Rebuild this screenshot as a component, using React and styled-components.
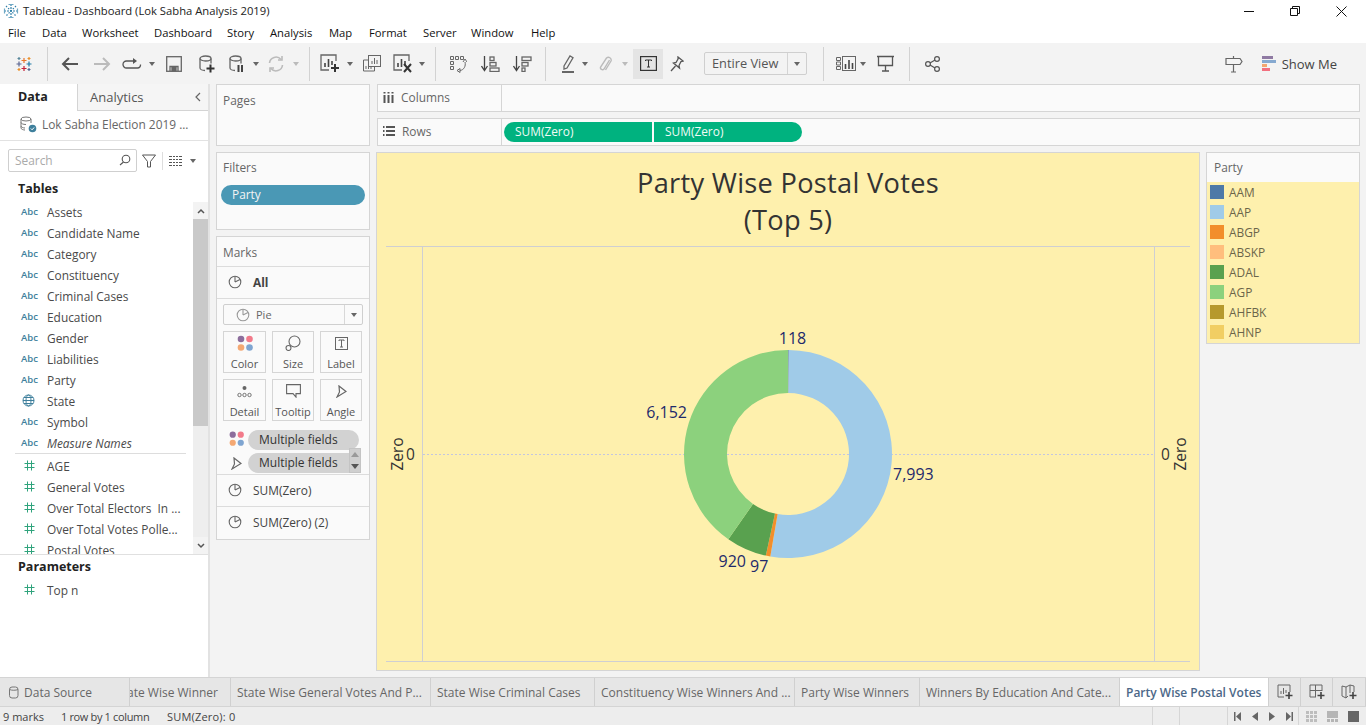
import React from "react";
import styled, { createGlobalStyle } from "styled-components";

const Global = createGlobalStyle`
  html, body { margin: 0; padding: 0; background: #fff; }
  * { box-sizing: border-box; }
  body { font-family: "Open Sans", "Noto Sans", sans-serif; font-size: 11.9px; color: #333; }
`;

const Page = styled.div`
  width: 1366px; height: 725px; overflow: hidden; display: flex; flex-direction: column; background: #fff;
`;
const TitleBar = styled.div`
  height: 22px; flex-shrink: 0; display: flex; align-items: center; padding-left: 3px; gap: 4px; color: #222; font-size: 11.25px;
`;
const TitleText = styled.span`
  padding-bottom: 2px;
`;
const WinButtons = styled.div`
  margin-left: auto; display: flex; align-items: center; height: 22px; padding-right: 2px;
`;
const WinButton = styled.div`
  width: 46px; height: 22px; display: flex; align-items: center; justify-content: center;
`;
const MenuBar = styled.div`
  height: 21px; flex-shrink: 0; display: flex; align-items: center; padding-left: 8px; color: #111; font-size: 11.25px;
`;
const MenuItem = styled.span`
  width: ${p => p.$w}px; white-space: nowrap;
`;
const Toolbar = styled.div`
  height: 41px; flex-shrink: 0; background: #f3f3f3; display: flex; align-items: center;
`;
const ToolGroup = styled.div`
  display: flex; align-items: center; height: 41px;
  padding: ${p => `0 ${p.$r || 0}px 0 ${p.$l || 0}px`};
`;
const ToolSep = styled.div`
  width: 1px; height: 34px; background: #d2d2d2;
`;
const Slot = styled.div`
  width: ${p => p.$w}px; height: 30px; display: flex; align-items: center; justify-content: center; flex-shrink: 0;
  background: ${p => p.$active ? "#e4e4e4" : "transparent"};
  margin-left: ${p => p.$ml || 0}px;
`;
const Caret = styled.i`
  display: block; width: 0; height: 0; border-left: 3.5px solid transparent; border-right: 3.5px solid transparent;
  border-top: 4px solid ${p => p.$c || "#666"};
`;
const ViewSelect = styled.div`
  width: 103px; height: 23px; margin-left: 13px; border: 1px solid #cfcfcf; border-radius: 2px; display: flex; align-items: center; color: #555; font-size: 12.8px;
`;
const ViewLabel = styled.span`
  flex: 1; padding-left: 7px; border-right: 1px solid #d4d4d4; line-height: 21px; white-space: nowrap;
`;
const ViewCaret = styled.span`
  width: 18px; display: flex; justify-content: center;
`;
const ToolRight = styled.div`
  margin-left: auto; display: flex; align-items: center; padding-right: 29px; gap: 19px;
`;
const ShowMe = styled.div`
  display: flex; align-items: center; gap: 6px; font-size: 13px; color: #444;
`;
const Main = styled.div`
  height: 593px; flex-shrink: 0; display: flex; background: #f3f3f3;
`;
const DataPane = styled.div`
  width: 210px; flex-shrink: 0; background: #fff; border-right: 2px solid #e2e2e2; display: flex; flex-direction: column;
`;
const DataTabs = styled.div`
  height: 27px; display: flex; flex-shrink: 0;
`;
const DataTab = styled.div`
  width: 77px; padding-left: 18px; line-height: 26px; font-weight: 700; color: #222; font-size: 12.5px;
`;
const AnalyticsTab = styled.div`
  flex: 1; background: #f5f5f5; border-left: 1px solid #d4d4d4; border-bottom: 1px solid #d4d4d4; display: flex; align-items: center; padding: 0 6px 0 12px; justify-content: space-between; color: #555; font-size: 13px;
`;
const SourceRow = styled.div`
  height: 30px; display: flex; align-items: center; gap: 5px; padding: 0 0 3px 20px; border-bottom: 1px solid #e2e2e2; color: #666; flex-shrink: 0; white-space: nowrap;
`;
const SearchRow = styled.div`
  height: 37px; display: flex; align-items: center; padding: 2px 0 0 8px; flex-shrink: 0;
`;
const SearchBox = styled.div`
  width: 129px; height: 23px; margin-right: 5px; border: 1px solid #cfcfcf; border-radius: 2px; display: flex; align-items: center; justify-content: space-between; padding: 0 5px 1px 6px; color: #aaa;
`;
const SearchSep = styled.div`
  width: 1px; height: 18px; background: #ddd; margin: 0 6px;
`;
const GridCaret = styled.span`
  margin-left: 8px;
`;
const SectionHead = styled.div`
  height: 23px; padding-left: 18px; padding-bottom: ${p => p.$pb || 0}px; display: flex; align-items: center; font-weight: 700; color: #222; flex-shrink: 0; font-size: 12.5px;
`;
const FieldArea = styled.div`
  height: 354px; display: flex; overflow: hidden; flex-shrink: 0; border-bottom: 1px solid #e0e0e0;
`;
const FieldList = styled.div`
  flex: 1; min-width: 0; overflow: hidden;
`;
const FieldRow = styled.div`
  height: 21px; display: flex; align-items: center; color: #4a4a4a; white-space: pre; font-style: ${p => p.$italic ? "italic" : "normal"};
  margin-top: ${p => p.$mt || 0}px;
`;
const FieldIcon = styled.span`
  width: 47px; padding-left: ${p => p.$pl || 21}px; display: flex; align-items: center; flex-shrink: 0;
`;
const AbcMark = styled.span`
  font-size: 9.5px; font-weight: 600; font-style: normal; color: #3e7f9c;
`;
const FieldDivider = styled.div`
  height: 2px; margin: 0 7px 0 15px; border-top: 1px solid #ddd;
`;
const ScrollBar = styled.div`
  width: 15px; background: #eee; display: flex; flex-direction: column; flex-shrink: 0; margin-top: 1px;
`;
const ScrollEnd = styled.div`
  height: 17px; display: flex; align-items: center; justify-content: center;
  background: #f3f3f3;
`;
const ScrollThumb = styled.div`
  height: 207px; background: #c9c9c9;
`;
const ScrollFill = styled.div`
  flex: 1;
`;
const Workspace = styled.div`
  flex: 1; min-width: 0; display: flex; padding: 0 6px 6px; gap: 6px;
`;
const SideCol = styled.div`
  width: 154px; flex-shrink: 0; display: flex; flex-direction: column; gap: 6px;
`;
const Card = styled.div`
  height: ${p => p.$h}px; background: #fafafa; border: 1px solid #d5d5d5; flex-shrink: 0;
`;
const CardTitle = styled.div`
  padding: ${p => p.$pt || 7}px 0 0 6px; color: #666; height: 29px;
`;
const FilterPill = styled.div`
  height: 20px; margin: 3px 4px 0 4px; border-radius: 10px; background: #4a98b5; color: #f4f4f4; padding-left: 11px; line-height: 19px;
`;
const MarksRow = styled.div`
  height: 32px; display: flex; align-items: center; border-top: 1px solid #dcdcdc; color: #444; padding-bottom: 2px;
  font-weight: ${p => p.$bold ? 700 : 400};
`;
const MarksRowIcon = styled.span`
  width: 36px; padding-left: 11px; display: flex; align-items: center;
`;
const SelectWrap = styled.div`
  border-top: 1px solid #dcdcdc;
`;
const MarkSelect = styled.div`
  height: 21px; margin: 5px 6px 0; background: #fafafa; border: 1px solid #cfcfcf; border-radius: 2px; display: flex; align-items: center; color: #666; font-size: 11px;
`;
const MarkSelectLabel = styled.span`
  flex: 1; display: flex; align-items: center; gap: 6px; padding-left: 12px; border-right: 1px solid #d8d8d8; height: 19px;
`;
const MarkSelectCaret = styled.span`
  width: 17px; display: flex; justify-content: center;
`;
const MarkGrid = styled.div`
  display: grid; grid-template-columns: 43px 42px 42px; grid-auto-rows: 42px; gap: 6px; margin: 6px 6px 0;
`;
const MarkBtn = styled.div`
  border: 1px solid #d5d5d5; display: flex; flex-direction: column; align-items: center; justify-content: flex-end; color: #555; font-size: 11px; padding-bottom: 1px; gap: 3px;
`;
const MarkIconWrap = styled.div`
  height: 20px; display: flex; align-items: center; justify-content: center;
`;
const PillRows = styled.div`
  margin-top: 9px; height: 44px; position: relative;
`;
const PillRow = styled.div`
  height: 23px; display: flex; align-items: flex-start; padding-left: 11px; gap: 3px;
`;
const AngleHolder = styled.span`
  width: 17px; display: flex; justify-content: center; padding-top: 4px;
`;
const GreyPill = styled.div`
  width: 111px; height: 20px; border-radius: 10px; background: #d2d2d2; color: #333; padding-left: 11px; line-height: 19px; white-space: nowrap; font-size: 12px;
`;
const PillScroll = styled.div`
  position: absolute; right: 8px; top: 18px; width: 12px; height: 25px; background: #cfcfcf; border: 1px solid #c4c4c4; display: flex; flex-direction: column; align-items: center; justify-content: space-around;
`;
const RightCol = styled.div`
  flex: 1; min-width: 0; display: flex; flex-direction: column; gap: 6px;
`;
const Shelf = styled.div`
  height: 28px; margin-left: 1px; flex-shrink: 0; background: #fafafa; border: 1px solid #d5d5d5; display: flex;
`;
const ShelfLabel = styled.div`
  width: 124px; border-right: 1px solid #d5d5d5; display: flex; align-items: center; gap: 7px; padding: 0 0 2px 5px; color: #666; flex-shrink: 0;
`;
const ShelfPills = styled.div`
  display: flex; align-items: center; padding-left: 2px; gap: 2px;
`;
const GreenPill = styled.div`
  width: 148px; height: 20px; background: #00b27f; color: #f1fbf6; padding-left: 11px; line-height: 19px;
  border-radius: ${p => p.$first ? "10px 0 0 10px" : "0 10px 10px 0"};
`;
const ViewRow = styled.div`
  flex: 1; min-height: 0; display: flex; gap: 6px;
`;
const ChartPane = styled.div`
  width: 824px; height: 519px; background: #fef0ad; border: 1px solid #d5d5d5; display: flex; flex-direction: column; flex-shrink: 0;
`;
const ChartTitle = styled.div`
  height: 93px; padding-top: 11px; text-align: center; font-size: 27.2px; letter-spacing: .3px; line-height: 37px; color: #333; flex-shrink: 0;
`;
const PlotSvg = styled.svg`
  display: block; width: 822px; height: 424px; font-family: "Open Sans", sans-serif;
`;
const Legend = styled.div`
  width: 154px; height: 192px; background: #fafafa; border: 1px solid #d5d5d5; flex-shrink: 0; display: flex; flex-direction: column;
`;
const LegendHead = styled.div`
  height: 29px; padding-left: 7px; line-height: 29px; color: #666;
`;
const LegendBody = styled.div`
  flex: 1; background: #fef0ad;
`;
const LegendRow = styled.div`
  height: 20px; display: flex; align-items: center; padding-left: 3px; gap: 5px; color: #6b654a;
`;
const Swatch = styled.span`
  width: 14px; height: 14px; background: ${p => p.$c}; flex-shrink: 0;
`;
const TabBar = styled.div`
  height: 30px; background: #e6e6e6; border-top: 1px solid #d4d4d4; border-bottom: 1px solid #d4d4d4; display: flex; flex-shrink: 0; color: #666; font-size: 12px;
`;
const SheetTab = styled.div`
  width: ${p => p.$w}px; flex-shrink: 0; overflow: hidden; white-space: nowrap; display: flex; align-items: center;
  justify-content: ${p => p.$clip ? "flex-end" : "flex-start"};
  padding: ${p => p.$clip ? "0 12px 0 0" : `0 0 0 ${p.$pl || 6}px`}; border-right: 1px solid #d0d0d0;
  background: ${p => p.$active ? "#fff" : "transparent"};
  color: ${p => p.$active ? "#4c6888" : "#666"};
  font-weight: ${p => p.$active ? 600 : 400};
  gap: 5px;
`;
const TabBtn = styled.div`
  width: ${p => p.$w}px; flex-shrink: 0; display: flex; align-items: center; justify-content: center; border-right: 1px solid #d0d0d0;
`;
const StatusBar = styled.div`
  height: 18px; background: #ededed; display: flex; align-items: center; color: #444; font-size: 11px; flex-shrink: 0;
`;
const StatusText = styled.span`
  width: ${p => p.$w}px; flex-shrink: 0; white-space: nowrap; padding-left: ${p => p.$pl || 0}px;
  letter-spacing: ${p => p.$ls || 0}px;
`;
const StatusCell = styled.span`
  width: ${p => p.$w}px; height: 18px; flex-shrink: 0; display: flex; align-items: center; justify-content: center; gap: ${p => p.$g || 0}px;
  border-right: ${p => p.$last ? "none" : "1px solid #d6d6d6"};
`;

/* icons */
const Ic = ({ w = 20, h = 20, s = "#555", sw = 1.3, children }) => (
  <svg width={w} height={h} viewBox={`0 0 ${w} ${h}`} fill="none" stroke={s} strokeWidth={sw}>{children}</svg>
);
const CrossLogo = () => (
  <svg width="18" height="18" viewBox="0 0 18 18" strokeWidth="1.2">
    <path d="M9 3v5M6.500 5.500h5" stroke="#e8762c" /><path d="M9 11v5M6.500 13.500h5" stroke="#c72037" />
    <path d="M4 6.500v5M1.500 9h5" stroke="#5b6591" /><path d="M14 6.500v5M11.500 9h5" stroke="#1f7aa5" />
    <path d="M4 2v3M2.500 3.500h3" stroke="#59879b" /><path d="M14 2v3M12.500 3.500h3" stroke="#eb912b" />
    <path d="M4 13v3M2.500 14.500h3" stroke="#eb912b" /><path d="M14 13v3M12.500 14.500h3" stroke="#5b6591" />
  </svg>
);
const SnowLogo = () => (
  <svg width="16" height="16" viewBox="0 0 16 16" stroke="#2f7fa8" strokeWidth="1.2" fill="none">
    <path d="M8 1v14M1 8h14" strokeDasharray="2 1" /><path d="M3 3l10 10M13 3L3 13" strokeDasharray="1.500 1.500" />
    <path d="M5.500 1.500h5M5.500 14.500h5M1.500 5.500v5M14.500 5.500v5" stroke="#6fa9c6" />
  </svg>
);
const Plus = ({ x, y }) => <path d={`M${x} ${y - 4}v8M${x - 4} ${y}h8`} stroke="#333" strokeWidth="2" fill="none" />;
const Back = ({ s, flip }) => (
  <Ic w={18} h={16} s={s} sw={2}><path d={flip ? "M1 8h15M10 2l6 6-6 6" : "M17 8H2M8 2L2 8l6 6"} /></Ic>
);
const LoopArrow = () => (
  <Ic w={20} h={14}><path d="M13 4H4.500a3 3 0 0 0 0 7h11a3 3 0 0 0 3-3.500" /><path d="M11 1l4 3-4 3" fill="#555" stroke="none" /></Ic>
);
const Save = () => (
  <Ic w={16} h={16} s="#666"><rect x=".7" y=".7" width="14.600" height="14.600" /><path d="M4 15v-4.500h8V15" /><rect x="6" y="11.500" width="4" height="3.500" fill="#666" /></Ic>
);
const Db = ({ kind }) => (
  <Ic w={16} h={18} s="#666">
    <ellipse cx="6.500" cy="3.500" rx="5.500" ry="2.500" />
    <path d="M1 3.500v9.500c0 1.400 2.500 2.500 5 2.500M12 3.500v5" />
    {kind === "plus" ? <Plus x={11.500} y={13.500} /> : <path d="M9.500 10v7M13 10v7" stroke="#444" strokeWidth="2" />}
  </Ic>
);
const Refresh = () => (
  <Ic w={18} h={18} s="#bbb" sw={1.600}><path d="M2.500 8A6.500 6.500 0 0 1 14 4.500M15.500 10A6.500 6.500 0 0 1 4 13.500" /><path d="M15 1v4h-4M3 17v-4h4" /></Ic>
);
const ChartAdd = () => (
  <Ic w={20} h={19} s="#666"><path d="M16 7V1H1v15h8" /><path d="M5 13V9M8.500 13V5M12 11V7" stroke="#444" strokeWidth="1.600" /><Plus x={15} y={14} /></Ic>
);
const Dup = () => (
  <Ic w={18} h={17} s="#666" sw={1}><rect x="5.500" y=".5" width="12" height="11" fill="#f3f3f3" /><path d="M9 9V6M11.500 9V3M14 9V5" /><path d="M5 5H.5v11h11v-4" /><path d="M3 14v-3M5.500 14v-2M8 14v-2" /></Ic>
);
const ChartClear = () => (
  <Ic w={20} h={19} s="#666"><path d="M16 7V1H1v15h8" /><path d="M5 13V9M8.500 13V5M12 11V7" stroke="#444" strokeWidth="1.600" /><path d="M11 10l7 8M18 10l-7 8" stroke="#333" strokeWidth="2" /></Ic>
);
const Swap = () => (
  <Ic w={18} h={18} s="#666" sw={1}>
    <path d="M1.500 1.500h3v3h-3zM6.500 1.500h3v3h-3zM11.500 1.500h3v3h-3zM1.500 6.500h3v3h-3zM1.500 11.500h3v3h-3z" />
    <path d="M16 7c1 4-1 8-5 8.500M8 15.500l3-2v4zM14 7l2-3 2 3" />
  </Ic>
);
const Sort = ({ desc }) => (
  <Ic w={19} h={16} s="#666"><path d="M3.500 0v14M.5 10l3 4.500 3-4.500" stroke="#444" /><rect x="9" y="1" width={desc ? 9 : 4} height="3.500" /><rect x="9" y="6.500" width="6" height="3.500" /><rect x="9" y="12" width={desc ? 3 : 9} height="3.500" /></Ic>
);
const Highlighter = () => (
  <Ic w={14} h={19} s="#666"><path d="M3 12L9 2l3 1.800-6 10.200-3 1z" /><path d="M1 18h12" strokeWidth="2" /></Ic>
);
const Clip = () => (
  <Ic w={13} h={18} s="#bbb" sw={1.400}><path d="M10.500 5L5 14a2 2 0 0 1-3.400-2L7.500 3a2.800 2.800 0 0 1 4.500 3L6.500 15" /></Ic>
);
const TBox = () => (
  <Ic w={17} h={15} s="#333" sw={1.200}><rect x=".6" y=".6" width="15.800" height="13.800" /><path d="M5.500 5V4h6v1M8.500 4v7M7 11h3" strokeWidth="1" /></Ic>
);
const Pin = () => (
  <Ic w={14} h={16} s="#555"><path d="M8 1l5 4-2 .5-2 4 .5 2.500L3.500 7 6 6.500 8 3zM5.500 10L1 15" /></Ic>
);
const ShowIc = () => (
  <Ic w={20} h={15} s="#666" sw={1}><path d="M.5 1.500h4v3h-4zM.5 6h4v3h-4zM.5 10.500h4v3h-4z" /><rect x="6.500" y=".5" width="13" height="14" /><path d="M9.500 13V8M13 13V4M16.500 13V7" strokeWidth="1.600" stroke="#444" /></Ic>
);
const Present = () => (
  <Ic w={17} h={17} s="#555"><path d="M0 1.500h17M1.500 1.500v9h14v-9M8.500 10.500V16M5 16h7" /></Ic>
);
const Share = () => (
  <Ic w={15} h={16} s="#555" sw={1.200}><circle cx="3" cy="8" r="2.400" /><circle cx="12" cy="3" r="2.400" /><circle cx="12" cy="13" r="2.400" /><path d="M5 7l5-3M5 9l5 3" /></Ic>
);
const SignPost = () => (
  <Ic w={18} h={18} s="#666" sw={1.200}><path d="M1 3.500h14l2 3-2 3H1zM8.500 1v2.500M8.500 9.500V17M6 17h5" /></Ic>
);
const ShowMeBars = () => (
  <svg width="14" height="16" viewBox="0 0 14 16">
    <rect y="0" width="11" height="3" fill="#8f7aa3" /><rect y="4" width="14" height="3" fill="#86a9d0" />
    <rect y="8" width="5" height="3" fill="#f3a670" /><rect y="12" width="8" height="3" fill="#f2707f" />
  </svg>
);
const PieIc = ({ s = "#666" }) => (
  <Ic w={14} h={14} s={s} sw={1.100}><circle cx="7" cy="7" r="5.800" /><path d="M7 7V1.200M7 7l5-2.500" /></Ic>
);
const Hash = () => (
  <Ic w={11} h={11} s="#2fa37c" sw={1}><path d="M3.500 .5v10M7.500 .5v10M.5 3.500h10M.5 7.500h10" /></Ic>
);
const Globe = () => (
  <Ic w={13} h={13} s="#3e7f9c" sw={1}><circle cx="6.500" cy="6.500" r="5.500" /><ellipse cx="6.500" cy="6.500" rx="2.500" ry="5.500" /><path d="M1 6.500h11M1.800 3.500h9.400M1.800 9.500h9.400" /></Ic>
);
const DbCheck = () => (
  <svg width="17" height="17" viewBox="0 0 17 17" fill="none" stroke="#777" strokeWidth="1">
    <ellipse cx="6" cy="3" rx="5" ry="2" /><path d="M1 3v9c0 1.200 2.200 2 4 2M11 3v4M1 6.500c0 1 2 2 5 2M1 10c0 1 2 2 4 2" />
    <circle cx="12.500" cy="12.500" r="3.800" fill="#3e7f9c" stroke="none" /><path d="M10.800 12.500l1.300 1.300 2-2.300" stroke="#fff" />
  </svg>
);
const Magnifier = () => (
  <Ic w={12} h={12} s="#555" sw={1.100}><circle cx="7" cy="5" r="3.800" /><path d="M4.500 8L1 11" /></Ic>
);
const Funnel = () => (
  <Ic w={14} h={14} s="#555" sw={1}><path d="M.5 1h13L8.500 7.500V13h-3V7.500z" /></Ic>
);
const GridList = () => (
  <svg width="13" height="10" viewBox="0 0 13 10" stroke="#555" strokeWidth="1" fill="none"><path d="M0 .5h13M0 3.500h13M0 6.500h13M0 9.500h13" /><path d="M3.500 0v10M6.500 0v10M9.500 0v10" stroke="#fff" /></svg>
);
const ColumnsIc = () => (
  <Ic w={11} h={11} s="#555" sw={2}><path d="M1.500 3v8M5.500 3v8M9.500 3v8" /><path d="M1.500 0v1.500M5.500 0v1.500M9.500 0v1.500" /></Ic>
);
const RowsIc = () => (
  <Ic w={12} h={10} s="#555" sw={2}><path d="M3 1h9M3 5h9M3 9h9M0 1h1.500M0 5h1.500M0 9h1.500" /></Ic>
);
const Dots = ({ size = 18 }) => (
  <svg width={size} height={size} viewBox="0 0 18 18">
    <circle cx="5" cy="5" r="3.300" fill="#8c6d9c" /><circle cx="13.500" cy="5" r="3.300" fill="#f27a8a" />
    <circle cx="5" cy="13.500" r="3.300" fill="#f4a873" /><circle cx="13.500" cy="13.500" r="3.300" fill="#7fa5d1" />
  </svg>
);
const SizeIc = () => (
  <Ic w={16} h={16} s="#666" sw={1.100}><circle cx="9.500" cy="6.500" r="5.500" /><circle cx="3.500" cy="13" r="2.500" /></Ic>
);
const LabelIc = () => (
  <Ic w={13} h={13} s="#666" sw={1}><rect x=".5" y=".5" width="12" height="12" /><path d="M4 4V3h5v1M6.500 3v7M5 10h3" /></Ic>
);
const DetailIc = () => (
  <svg width="15" height="13" viewBox="0 0 15 13" fill="none" stroke="#666" strokeWidth=".9"><circle cx="7.500" cy="3" r="2" fill="#666" stroke="none" /><circle cx="2.500" cy="10" r="1.700" /><circle cx="7.500" cy="10" r="1.700" /><circle cx="12.500" cy="10" r="1.700" /></svg>
);
const TooltipIc = () => (
  <Ic w={15} h={14} s="#666" sw={1.100}><path d="M.6.6h13.800v9H10v3.500L7 9.600H.6z" /></Ic>
);
const AngleIc = ({ s = "#666" }) => (
  <Ic w={11} h={13} s={s} sw={1.200}><path d="M3 1l7 5.500-9 5.500 2.500-5z" /></Ic>
);
const Chevron = ({ up, s = "#555" }) => (
  <Ic w={8} h={6} s={s} sw={1.500}><path d={up ? "M1 5l3-3 3 3" : "M1 1l3 3 3-3"} /></Ic>
);
const Tri = ({ up, c }) => (
  <svg width="8" height="5" viewBox="0 0 8 5"><path d={up ? "M0 5L4 0l4 5z" : "M0 0h8L4 5z"} fill={c} /></svg>
);
const DbSmall = () => (
  <Ic w={10} h={13} s="#777" sw={1}><rect x=".5" y="1" width="8.500" height="11" rx="2.500" /><path d="M.5 3.500c2 1 6.500 1 8.500 0" /></Ic>
);
const AddSheet = () => (
  <Ic w={16} h={16} s="#666" sw={1}><path d="M13 8V1H1v12h6" /><path d="M4 10V7M6.500 10V4M9 9V6" /><path d="M12 8v7M8.500 11.500h7" stroke="#444" strokeWidth="1.600" /></Ic>
);
const AddDash = () => (
  <Ic w={16} h={16} s="#666" sw={1}><path d="M7 13H1V1h12v6M1 6.500h12M6.500 1v12" /><path d="M12 8v7M8.500 11.500h7" stroke="#444" strokeWidth="1.600" /></Ic>
);
const AddStory = () => (
  <Ic w={16} h={16} s="#666" sw={1}><path d="M7 12l-2 2-4-2V2l4 1 4-2 4 1v6M5 3v11M9 1v8" /><path d="M12 8v7M8.500 11.500h7" stroke="#444" strokeWidth="1.600" /></Ic>
);
const NavFirst = ({ s = "#666", last }) => (
  <svg width="7" height="9" viewBox="0 0 7 9" fill={s}>{last ? <path d="M0 0l5 4.500L0 9zM5.500 0H7v9H5.500z" /> : <path d="M7 0L2 4.500 7 9zM0 0h1.500v9H0z" />}</svg>
);
const NavStep = ({ right }) => (
  <svg width="6" height="9" viewBox="0 0 6 9" fill="#666">{right ? <path d="M0 0l6 4.500L0 9z" /> : <path d="M6 0L0 4.500 6 9z" />}</svg>
);
const ViewSmall = () => (
  <svg width="11" height="11" viewBox="0 0 11 11" fill="#bdbdbd"><path d="M0 0h3v3H0zM4 0h3v3H4zM8 0h3v3H8zM0 4h3v3H0zM4 4h3v3H4zM8 4h3v3H8zM0 8h3v3H0zM4 8h3v3H4zM8 8h3v3H8z" /></svg>
);
const ViewMid = () => (
  <svg width="11" height="11" viewBox="0 0 11 11" fill="#b5b5b5"><path d="M0 0h11v7H0zM0 8h3v3H0zM4 8h3v3H4zM8 8h3v3H8z" /></svg>
);
const ViewFull = () => (
  <svg width="11" height="11" viewBox="0 0 11 11" fill="#666"><path d="M0 0h11v11H0z" /></svg>
);

const polar = (r, deg) => {
  const a = (deg - 90) * Math.PI / 180;
  return [788 + r * Math.cos(a), 454 + r * Math.sin(a)];
};
const arc = (a0, a1, R = 104, r = 61) => {
  const [x0, y0] = polar(R, a0), [x1, y1] = polar(R, a1), [x2, y2] = polar(r, a1), [x3, y3] = polar(r, a0);
  const lg = a1 - a0 > 180 ? 1 : 0;
  return `M${x0} ${y0}A${R} ${R} 0 ${lg} 1 ${x1} ${y1}L${x2} ${y2}A${r} ${r} 0 ${lg} 0 ${x3} ${y3}Z`;
};
const slices = [
  [0, 0.4, "#4e79a7"], [0.4, 189.8, "#a0cbe8"], [189.8, 192.3, "#f28e2b"], [192.3, 215, "#59a14f"], [215, 360, "#8cd17d"],
];
const legend = [["AAM", "#4e79a7"], ["AAP", "#a0cbe8"], ["ABGP", "#f28e2b"], ["ABSKP", "#ffbe7d"], ["ADAL", "#59a14f"], ["AGP", "#8cd17d"], ["AHFBK", "#b6992d"], ["AHNP", "#f1ce63"]];
const dims = ["Assets", "Candidate Name", "Category", "Constituency", "Criminal Cases", "Education", "Gender", "Liabilities", "Party"];
const measures = ["AGE", "General Votes", "Over Total Electors  In ...", "Over Total Votes Polle...", "Postal Votes"];
const menus = [["File", 34], ["Data", 40], ["Worksheet", 72], ["Dashboard", 73], ["Story", 43], ["Analysis", 59], ["Map", 40], ["Format", 54], ["Server", 48], ["Window", 60], ["Help", 40]];
const tabs = [["State Wise General Votes And P...", 200], ["State Wise Criminal Cases", 164], ["Constituency Wise Winners And ...", 200], ["Party Wise Winners", 125], ["Winners By Education And Cate...", 200]];

const Plot = () => {
  const ink = "#1f2a6b";
  const dark = "#333";
  return (
    <PlotSvg viewBox="377 246 822 424">
      <path d="M386 246.500H1190M386 661.500H1190M422.500 246V661M1154.500 246V661" stroke="#cfcfd2" strokeWidth="1" />
      <path d="M423 454.500H1154" stroke="#c3c6e0" strokeWidth="1" strokeDasharray="2 2" />
      {slices.map(([a, b, c]) => <path key={c} d={arc(a, b)} fill={c} />)}
      <g fontSize="16" fill={ink}>
        <text x="792.500" y="344" textAnchor="middle">118</text>
        <text x="687" y="418" textAnchor="end">6,152</text>
        <text x="893" y="480">7,993</text>
        <text x="746" y="567" textAnchor="end">920</text>
        <text x="750" y="572">97</text>
      </g>
      <g fontSize="15.500" fill={dark}>
        <text x="410.500" y="460" textAnchor="middle">0</text>
        <text x="1165.500" y="460" textAnchor="middle">0</text>
        <text transform="translate(403 454) rotate(-90)" textAnchor="middle">Zero</text>
        <text transform="translate(1186 454) rotate(-90)" textAnchor="middle">Zero</text>
      </g>
    </PlotSvg>
  );
};

export default function App() {
  return (
    <Page>
      <Global />
      <TitleBar>
        <SnowLogo />
        <TitleText>Tableau - Dashboard (Lok Sabha Analysis 2019)</TitleText>
        <WinButtons>
          <WinButton><svg width="10" height="10" stroke="#111"><path d="M0 5.500h10" /></svg></WinButton>
          <WinButton><svg width="10" height="10" stroke="#111" fill="none"><path d="M.5 2.500h7v7h-7zM2.500 2.500v-2h7v7h-2" /></svg></WinButton>
          <WinButton><svg width="11" height="11" stroke="#111"><path d="M.5.5l10 10M10.500.5l-10 10" /></svg></WinButton>
        </WinButtons>
      </TitleBar>
      <MenuBar>
        {menus.map(([m, w]) => <MenuItem key={m} $w={w}>{m}</MenuItem>)}
      </MenuBar>
      <Toolbar>
        <ToolGroup><Slot $w={47}><CrossLogo /></Slot></ToolGroup>
        <ToolSep />
        <ToolGroup $l={5} $r={8}>
          <Slot $w={34}><Back /></Slot>
          <Slot $w={30}><Back s="#bbb" flip /></Slot>
          <Slot $w={30}><LoopArrow /></Slot>
          <Slot $w={10}><Caret /></Slot>
          <Slot $w={34}><Save /></Slot>
          <Slot $w={32}><Db kind="plus" /></Slot>
          <Slot $w={28}><Db kind="pause" /></Slot>
          <Slot $w={10}><Caret /></Slot>
          <Slot $w={30}><Refresh /></Slot>
          <Slot $w={10}><Caret $c="#bbb" /></Slot>
        </ToolGroup>
        <ToolSep />
        <ToolGroup $l={5} $r={8}>
          <Slot $w={30}><ChartAdd /></Slot>
          <Slot $w={10}><Caret /></Slot>
          <Slot $w={34}><Dup /></Slot>
          <Slot $w={28}><ChartClear /></Slot>
          <Slot $w={10}><Caret /></Slot>
        </ToolGroup>
        <ToolSep />
        <ToolGroup $l={5} $r={6}>
          <Slot $w={34}><Swap /></Slot>
          <Slot $w={30}><Sort /></Slot>
          <Slot $w={34}><Sort desc /></Slot>
        </ToolGroup>
        <ToolSep />
        <ToolGroup $l={10} $r={16}>
          <Slot $w={24}><Highlighter /></Slot>
          <Slot $w={10}><Caret /></Slot>
          <Slot $w={30}><Clip /></Slot>
          <Slot $w={10}><Caret $c="#bbb" /></Slot>
          <Slot $w={30} $ml={3} $active><TBox /></Slot>
          <Slot $w={28}><Pin /></Slot>
          <ViewSelect>
            <ViewLabel>Entire View</ViewLabel>
            <ViewCaret><Caret /></ViewCaret>
          </ViewSelect>
        </ToolGroup>
        <ToolSep />
        <ToolGroup $l={10} $r={7}>
          <Slot $w={24}><ShowIc /></Slot>
          <Slot $w={10}><Caret /></Slot>
          <Slot $w={34}><Present /></Slot>
        </ToolGroup>
        <ToolSep />
        <ToolGroup $l={5}>
          <Slot $w={34}><Share /></Slot>
        </ToolGroup>
        <ToolRight>
          <SignPost />
          <ShowMe><ShowMeBars />Show Me</ShowMe>
        </ToolRight>
      </Toolbar>
      <Main>
        <DataPane>
          <DataTabs>
            <DataTab>Data</DataTab>
            <AnalyticsTab>Analytics<Ic w={8} h={10} s="#666" sw={1.200}><path d="M6 1L2 5l4 4" /></Ic></AnalyticsTab>
          </DataTabs>
          <SourceRow><DbCheck />Lok Sabha Election 2019 ...</SourceRow>
          <SearchRow>
            <SearchBox>Search<Magnifier /></SearchBox>
            <Funnel />
            <SearchSep />
            <GridList />
            <GridCaret><Caret /></GridCaret>
          </SearchRow>
          <SectionHead $pb={3}>Tables</SectionHead>
          <FieldArea>
            <FieldList>
              {dims.map(d => <FieldRow key={d}><FieldIcon><AbcMark>Abc</AbcMark></FieldIcon>{d}</FieldRow>)}
              <FieldRow><FieldIcon $pl={22}><Globe /></FieldIcon>State</FieldRow>
              <FieldRow><FieldIcon><AbcMark>Abc</AbcMark></FieldIcon>Symbol</FieldRow>
              <FieldRow $italic><FieldIcon><AbcMark>Abc</AbcMark></FieldIcon>Measure Names</FieldRow>
              <FieldDivider />
              {measures.map(m => <FieldRow key={m}><FieldIcon $pl={24}><Hash /></FieldIcon>{m}</FieldRow>)}
            </FieldList>
            <ScrollBar>
              <ScrollEnd><Chevron up /></ScrollEnd>
              <ScrollThumb />
              <ScrollFill />
              <ScrollEnd><Chevron /></ScrollEnd>
            </ScrollBar>
          </FieldArea>
          <SectionHead>Parameters</SectionHead>
          <FieldRow $mt={1}><FieldIcon $pl={24}><Hash /></FieldIcon>Top n</FieldRow>
        </DataPane>
        <Workspace>
          <SideCol>
            <Card $h={62}><CardTitle>Pages</CardTitle></Card>
            <Card $h={78}>
              <CardTitle $pt={6}>Filters</CardTitle>
              <FilterPill>Party</FilterPill>
            </Card>
            <Card $h={304}>
              <CardTitle>Marks</CardTitle>
              <MarksRow $bold><MarksRowIcon><PieIc /></MarksRowIcon>All</MarksRow>
              <SelectWrap>
                <MarkSelect>
                  <MarkSelectLabel><PieIc s="#999" />Pie</MarkSelectLabel>
                  <MarkSelectCaret><Caret /></MarkSelectCaret>
                </MarkSelect>
              </SelectWrap>
              <MarkGrid>
                <MarkBtn><MarkIconWrap><Dots /></MarkIconWrap>Color</MarkBtn>
                <MarkBtn><MarkIconWrap><SizeIc /></MarkIconWrap>Size</MarkBtn>
                <MarkBtn><MarkIconWrap><LabelIc /></MarkIconWrap>Label</MarkBtn>
                <MarkBtn><MarkIconWrap><DetailIc /></MarkIconWrap>Detail</MarkBtn>
                <MarkBtn><MarkIconWrap><TooltipIc /></MarkIconWrap>Tooltip</MarkBtn>
                <MarkBtn><MarkIconWrap><AngleIc /></MarkIconWrap>Angle</MarkBtn>
              </MarkGrid>
              <PillRows>
                <PillRow><Dots size={17} /><GreyPill>Multiple fields</GreyPill></PillRow>
                <PillRow><AngleHolder><AngleIc /></AngleHolder><GreyPill>Multiple fields</GreyPill></PillRow>
                <PillScroll><Tri up c="#999" /><Tri c="#555" /></PillScroll>
              </PillRows>
              <MarksRow><MarksRowIcon><PieIc /></MarksRowIcon>SUM(Zero)</MarksRow>
              <MarksRow><MarksRowIcon><PieIc /></MarksRowIcon>SUM(Zero) (2)</MarksRow>
            </Card>
          </SideCol>
          <RightCol>
            <Shelf>
              <ShelfLabel><ColumnsIc />Columns</ShelfLabel>
            </Shelf>
            <Shelf>
              <ShelfLabel><RowsIc />Rows</ShelfLabel>
              <ShelfPills>
                <GreenPill $first>SUM(Zero)</GreenPill>
                <GreenPill>SUM(Zero)</GreenPill>
              </ShelfPills>
            </Shelf>
            <ViewRow>
              <ChartPane>
                <ChartTitle>Party Wise Postal Votes<br />(Top 5)</ChartTitle>
                <Plot />
              </ChartPane>
              <Legend>
                <LegendHead>Party</LegendHead>
                <LegendBody>
                  {legend.map(([n, c]) => <LegendRow key={n}><Swatch $c={c} />{n}</LegendRow>)}
                </LegendBody>
              </Legend>
            </ViewRow>
          </RightCol>
        </Workspace>
      </Main>
      <TabBar>
        <SheetTab $w={130} $pl={9}><DbSmall />Data Source</SheetTab>
        <SheetTab $w={101} $clip>State Wise Winner</SheetTab>
        {tabs.map(([t, w]) => <SheetTab key={t} $w={w}>{t}</SheetTab>)}
        <SheetTab $w={149} $active>Party Wise Postal Votes</SheetTab>
        <TabBtn $w={32}><AddSheet /></TabBtn>
        <TabBtn $w={32}><AddDash /></TabBtn>
        <TabBtn $w={33}><AddStory /></TabBtn>
      </TabBar>
      <StatusBar>
        <StatusText $w={61} $pl={3}>9 marks</StatusText>
        <StatusText $w={106} $ls={-0.35}>1 row by 1 column</StatusText>
        <StatusText $w={960} $ls={0.2}>SUM(Zero): 0</StatusText>
        <StatusCell $w={26} />
        <StatusCell $w={27} />
        <StatusCell $w={48} />
        <StatusCell $w={71} $g={11}><NavFirst /><NavStep /><NavStep right /><NavFirst last /></StatusCell>
        <StatusCell $w={67} $g={10} $last><ViewSmall /><ViewMid /><ViewFull /></StatusCell>
      </StatusBar>
    </Page>
  );
}
